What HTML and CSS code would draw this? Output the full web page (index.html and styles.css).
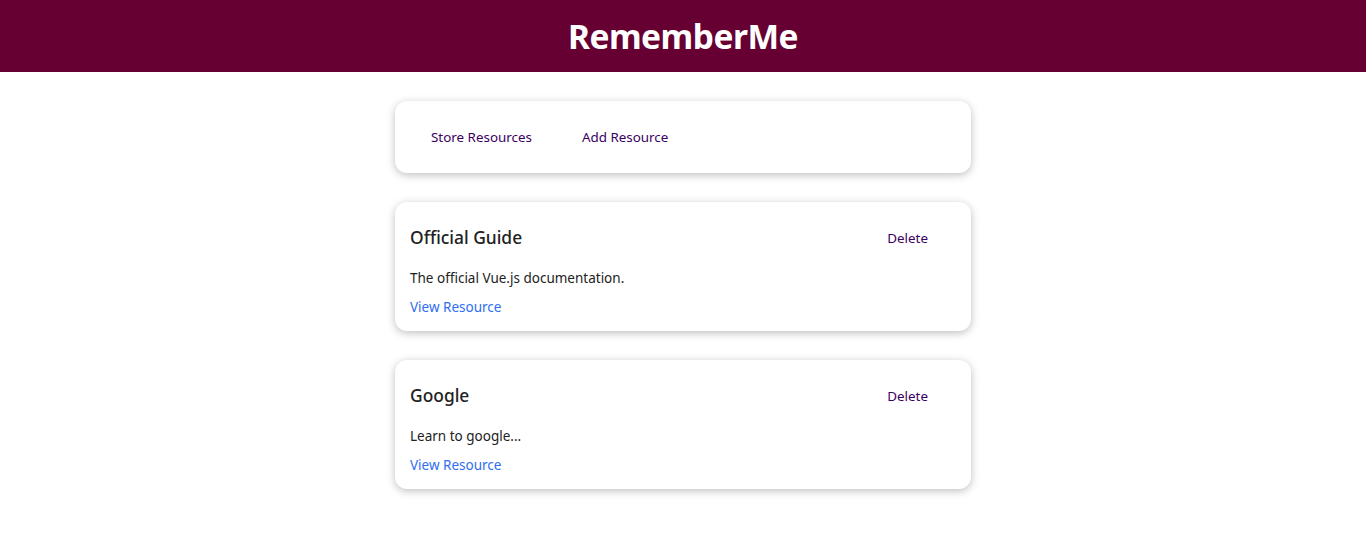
FILE: index.html
```html
<!DOCTYPE html>
<html lang="en">
<head>
<meta charset="utf-8">
<title>RememberMe</title>
<link rel="stylesheet" href="styles.css">
</head>
<body>
<header class="top">
  <h1 class="brand">RememberMe</h1>
</header>
<main class="page">
  <section class="card nav-card">
    <button class="btn flat">Store Resources</button>
    <button class="btn flat">Add Resource</button>
  </section>
  <ul class="list">
    <li class="card res">
      <div class="res-head">
        <h3 class="res-title">Official Guide</h3>
        <button class="btn flat">Delete</button>
      </div>
      <p class="res-desc">The official Vue.js documentation.</p>
      <nav class="res-link"><a href="#">View Resource</a></nav>
    </li>
    <li class="card res">
      <div class="res-head">
        <h3 class="res-title">Google</h3>
        <button class="btn flat">Delete</button>
      </div>
      <p class="res-desc">Learn to google...</p>
      <nav class="res-link"><a href="#">View Resource</a></nav>
    </li>
  </ul>
</main>
</body>
</html>
```

FILE: styles.css
```css
* { box-sizing: border-box; }
html, body {
  margin: 0;
  font-family: "Noto Sans", "Open Sans", sans-serif;
  color: #222;
}
.top {
  height: 72px;
  background: #660033;
  display: flex;
  align-items: center;
  justify-content: center;
}
.brand {
  margin: 0;
  color: #fff;
  font-size: 33.5px;
  font-weight: 700;
  letter-spacing: -0.5px;
}
.page {
  padding-top: 29px;
}
.card {
  width: 576px;
  margin: 0 auto 29px;
  background: #fff;
  border-radius: 12px;
  box-shadow: 0 2px 8px rgba(0, 0, 0, 0.26);
  padding: 16px;
}
.nav-card {
  display: flex;
  gap: 10px;
  padding: 16px 16px;
}
.btn {
  font-family: inherit;
  font-size: 13.4px;
  line-height: 16px;
  padding: 11px 19px 13px 19px;
  border: 1px solid transparent;
  background: transparent;
  color: #3a0061;
  cursor: pointer;
  height: 40px;
}
.list {
  list-style: none;
  margin: 0;
  padding: 0;
}
.res {
  padding: 16px 16px 14px 15px;
}
.res-head {
  display: flex;
  align-items: center;
  justify-content: space-between;
  height: 40px;
}
.res-head .btn {
  padding: 11px 26px 13px 20px;
}
.res-title {
  margin: 0 0 2px;
  font-size: 17.4px;
  font-weight: 500;
  color: #222;
}
.res-desc {
  margin: 10px 0 9px;
  font-size: 13.5px;
  line-height: 20px;
  color: #222;
}
.res-link {
  font-size: 13.5px;
  line-height: 20px;
}
.res-link a {
  color: #2f6ef0;
  text-decoration: none;
}
```
